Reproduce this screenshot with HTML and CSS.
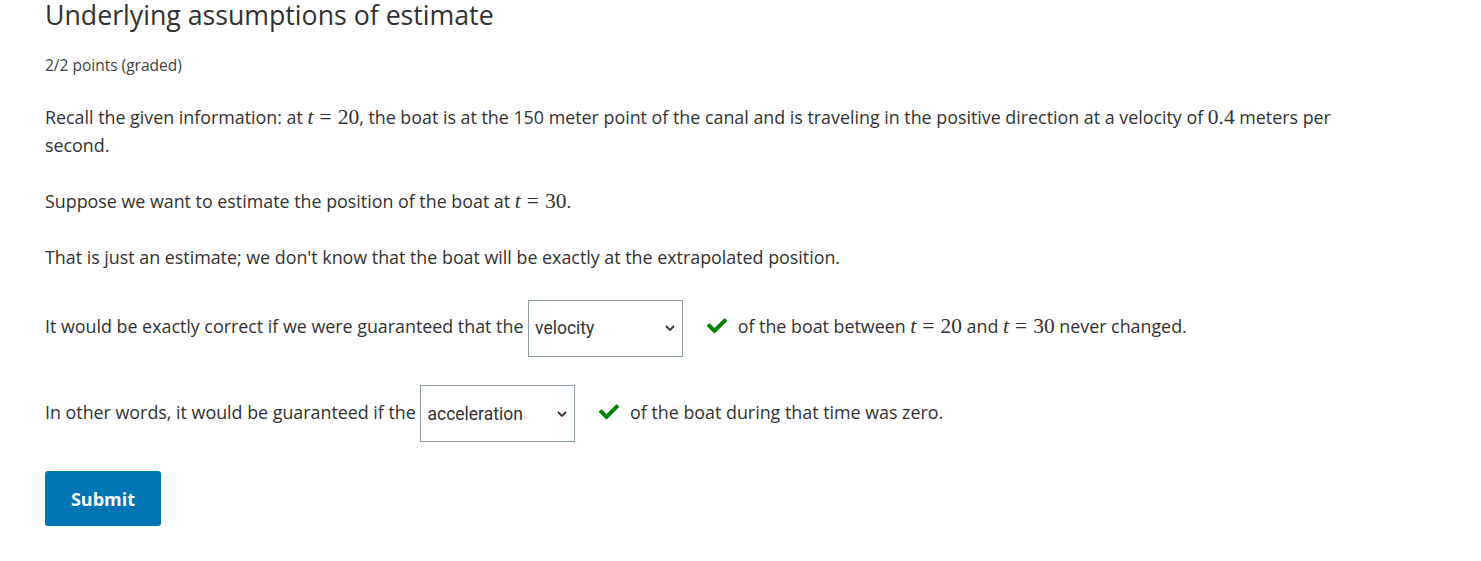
FILE: index.html
```html
<!DOCTYPE html>
<html>
<head>
<meta charset="utf-8">
<link rel="stylesheet" href="styles.css">
</head>
<body>
<div class="problem">
  <h3 class="title">Underlying assumptions of estimate</h3>
  <div class="points">2/2 points (graded)</div>
  <p>Recall the given information: at <span class="m"><i>t</i><span class="eq">=</span>20</span>, the boat is at the 150 meter point of the canal and is traveling in the positive direction at a velocity of <span class="m">0.4</span> meters per second.</p>
  <p>Suppose we want to estimate the position of the boat at <span class="m"><i>t</i><span class="eq">=</span>30</span>.</p>
  <p>That is just an estimate; we don't know that the boat will be exactly at the extrapolated position.</p>
  <p class="row">It would be exactly correct if we were guaranteed that the <span class="sel"><span class="val">velocity</span><svg class="chev" viewBox="0 0 10 6" width="10" height="6"><path d="M1 1l4 4 4-4" fill="none" stroke="#333" stroke-width="1.8"/></svg></span><svg class="check" viewBox="0 60 512 400" width="20" height="16"><path fill="#008100" d="M173.898 439.404l-166.4-166.4c-9.997-9.997-9.997-26.206 0-36.204l36.203-36.204c9.997-9.998 26.207-9.998 36.204 0L192 312.69 432.095 72.596c9.997-9.997 26.207-9.997 36.204 0l36.203 36.204c9.997 9.997 9.997 26.206 0 36.204l-294.4 294.401c-9.998 9.997-26.207 9.997-36.204-.001z"/></svg> of the boat between <span class="m"><i>t</i><span class="eq">=</span>20</span> and <span class="m"><i>t</i><span class="eq">=</span>30</span> never changed.</p>
  <p class="row">In other words, it would be guaranteed if the <span class="sel"><span class="val">acceleration</span><svg class="chev" viewBox="0 0 10 6" width="10" height="6"><path d="M1 1l4 4 4-4" fill="none" stroke="#333" stroke-width="1.8"/></svg></span><svg class="check" viewBox="0 60 512 400" width="20" height="16"><path fill="#008100" d="M173.898 439.404l-166.4-166.4c-9.997-9.997-9.997-26.206 0-36.204l36.203-36.204c9.997-9.998 26.207-9.998 36.204 0L192 312.69 432.095 72.596c9.997-9.997 26.207-9.997 36.204 0l36.203 36.204c9.997 9.997 9.997 26.206 0 36.204l-294.4 294.401c-9.998 9.997-26.207 9.997-36.204-.001z"/></svg> of the boat during that time was zero.</p>
  <button class="submit">Submit</button>
</div>
</body>
</html>
```
FILE: styles.css
```css
html, body { margin: 0; padding: 0; background: #fff; }
body { font-family: "Open Sans", "Noto Sans", sans-serif; color: #313131; }
.problem { padding: 0 45px; width: 1300px; }
.title { margin: 0; font-weight: 400; font-size: 26.7px; line-height: 30px; color: #313131; }
.points { margin-top: 25px; font-size: 15.5px; line-height: 20px; color: #414141; }
p { margin: 28px 0 0; font-size: 17.85px; line-height: 28px; color: #313131; }
.points + p { margin-top: 28px; }
.m { font-family: "Liberation Serif", "DejaVu Serif", serif; font-size: 21.5px; }
.m i { font-style: italic; }
.eq { margin: 0 6px; }
.row { line-height: 57px; margin-top: 27px; }
.sel { display: inline-flex; align-items: center; justify-content: space-between; vertical-align: middle; box-sizing: border-box; width: 155px; height: 57px; border: 1px solid #8a9ba1; padding: 0 7px 0 6px; font-family: Roboto, "Liberation Sans", sans-serif; font-size: 17.5px; line-height: 20px; color: #313131; }
.check { margin: 0 6px 0 24px; vertical-align: -1px; }
.submit { display: block; margin-top: 29px; width: 116px; height: 55px; border: 0; border-radius: 3px; background: #0075b4; color: #fff; font-family: inherit; font-weight: 700; font-size: 18px; }
```
